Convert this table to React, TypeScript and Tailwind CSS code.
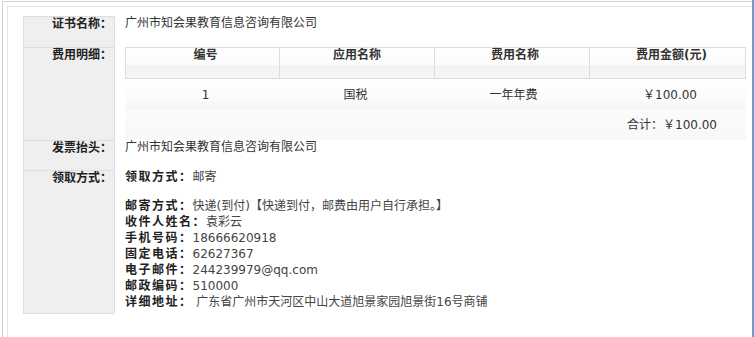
const font = "font-['DejaVu_Sans','Noto_Sans_CJK_SC',sans-serif]";

const fees = [{ no: "1", app: "国税", name: "一年年费", amount: "￥100.00" }];

const shipping: [string, string][] = [
  ["邮寄方式：", "快递(到付)【快递到付，邮费由用户自行承担。】"],
  ["收件人姓名：", "袁彩云"],
  ["手机号码：", "18666620918"],
  ["固定电话：", "62627367"],
  ["电子邮件：", "244239979@qq.com"],
  ["邮政编码：", "510000"],
  ["详细地址：", " 广东省广州市天河区中山大道旭景家园旭景街16号商铺"],
];

function Label({ children, last = false }: { children: React.ReactNode; last?: boolean }) {
  return (
    <div
      className={`w-[92px] shrink-0 bg-[#efefef] border-t border-l border-r border-[#dedede] ${
        last ? "border-b" : ""
      } text-right pr-[2px] font-bold text-[#222] leading-[14px]`}
    >
      {children}
    </div>
  );
}

const cols = "grid grid-cols-[153px_155px_155px_156px]";

export default function App() {
  return (
    <div className={`w-[754px] h-[337px] bg-white border-r-2 border-[#7397d5] overflow-hidden text-[12px] text-[#333] ${font}`}>
      <div className="mt-[1px] ml-[2px] h-full border-t border-l border-[#d0d0d0]">
        <div className="mt-[4px] ml-[4px] h-full border-t border-l border-[#e4e4e4] pt-[9px] pl-[15px]">
          {/* 证书名称 */}
          <div className="flex h-[31px]">
            <Label>证书名称：</Label>
            <div className="pl-[10px] leading-[14px]">广州市知会果教育信息咨询有限公司</div>
          </div>

          {/* 费用明细 */}
          <div className="flex h-[93px]">
            <Label>费用明细：</Label>
            <div className="pl-[10px]">
              <div className="w-[621px]">
                <div className={`${cols} h-[32px] border border-[#dcdcdc] bg-[linear-gradient(to_bottom,#ffffff_0%,#fbfbfb_55%,#f3f3f3_60%,#f6f6f6_100%)] font-bold leading-[14px]`}>
                  <div className="text-center pl-[6px]">编号</div>
                  <div className="text-center border-l border-[#dcdcdc]">应用名称</div>
                  <div className="text-center border-l border-[#dcdcdc] pl-[6px]">费用名称</div>
                  <div className="text-center border-l border-[#dcdcdc] pl-[8px]">费用金额(元)</div>
                </div>
                {fees.map((f) => (
                  <div
                    key={f.no}
                    className={`${cols} h-[30px] items-center bg-[linear-gradient(to_bottom,#ffffff_0%,#fcfcfc_60%,#f5f5f5_100%)]`}
                  >
                    <div className="text-center pl-[8px] pt-[2px]">{f.no}</div>
                    <div className="text-center pt-[2px]">{f.app}</div>
                    <div className="text-center pl-[6px] pt-[2px]">{f.name}</div>
                    <div className="text-center pl-[8px] pt-[2px]">{f.amount}</div>
                  </div>
                ))}
                <div className="h-[31px] flex items-center justify-end pr-[29px] bg-[linear-gradient(to_bottom,#fbfbfb_0%,#f8f8f8_100%)]">
                  合计：￥100.00
                </div>
              </div>
            </div>
          </div>

          {/* 发票抬头 */}
          <div className="flex h-[30px]">
            <Label>发票抬头：</Label>
            <div className="pl-[10px] leading-[14px]">广州市知会果教育信息咨询有限公司</div>
          </div>

          {/* 领取方式 */}
          <div className="flex h-[144px]">
            <Label last>领取方式：</Label>
            <div className="pl-[10px] text-[#444]">
              <div className="leading-[14px]">
                <span className="font-bold text-[#222] tracking-[1.5px]">领取方式：</span>
                邮寄
              </div>
              <div className="mt-[14px] leading-[16px]">
                {shipping.map(([k, v]) => (
                  <div key={k} className="whitespace-pre">
                    <span className="font-bold text-[#222] tracking-[1.5px]">{k}</span>
                    {v}
                  </div>
                ))}
              </div>
            </div>
          </div>
        </div>
      </div>
    </div>
  );
}
